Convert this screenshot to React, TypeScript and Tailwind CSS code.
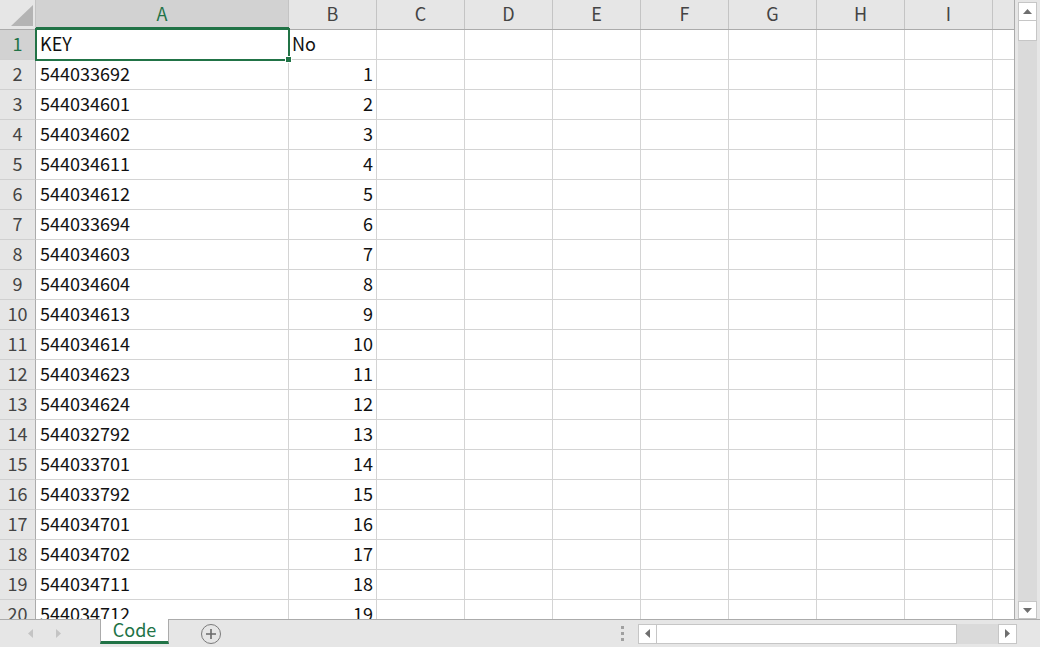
import React from 'react';

const data: [string, number][] = [
  ['544033692', 1],
  ['544034601', 2],
  ['544034602', 3],
  ['544034611', 4],
  ['544034612', 5],
  ['544033694', 6],
  ['544034603', 7],
  ['544034604', 8],
  ['544034613', 9],
  ['544034614', 10],
  ['544034623', 11],
  ['544034624', 12],
  ['544032792', 13],
  ['544033701', 14],
  ['544033792', 15],
  ['544034701', 16],
  ['544034702', 17],
  ['544034711', 18],
  ['544034712', 19],
];

const emptyCols = ['C', 'D', 'E', 'F', 'G', 'H', 'I'];

function Tri({ dir, className }: { dir: 'up' | 'down' | 'left' | 'right'; className?: string }) {
  const pts = {
    up: '0,5 9,5 4.5,0',
    down: '0,0 9,0 4.5,5',
    left: '5,0 5,9 0,4.5',
    right: '0,0 0,9 5,4.5',
  }[dir];
  const vertical = dir === 'up' || dir === 'down';
  return (
    <svg width={vertical ? 9 : 5} height={vertical ? 5 : 9} className={className}>
      <polygon points={pts} fill="currentColor" />
    </svg>
  );
}

function Row({ n, a, b }: { n: number; a: string; b: string | number }) {
  const sel = n === 1;
  return (
    <div className="flex h-[30px] shrink-0">
      <div
        className={`w-[36px] shrink-0 flex items-center justify-center pb-[3px] border-r border-b border-r-[#ababab] border-b-[#d0d0d0] ${
          sel ? 'bg-[#d2d2d2] text-[#217346]' : 'bg-[#e6e6e6] text-[#444]'
        }`}
      >
        {n}
      </div>
      <div className="w-[253px] shrink-0 flex items-center pl-[4px] pb-[3px] border-r border-b border-[#d4d4d4] bg-white">
        {a}
      </div>
      <div
        className={`w-[88px] shrink-0 flex items-center pb-[3px] border-r border-b border-[#d4d4d4] bg-white ${
          typeof b === 'number' ? 'justify-end pr-[3px]' : 'pl-[3px]'
        }`}
      >
        {b}
      </div>
      {emptyCols.map((c) => (
        <div key={c} className="w-[88px] shrink-0 border-r border-b border-[#d4d4d4] bg-white" />
      ))}
      <div className="flex-1 border-b border-[#d4d4d4] bg-white" />
    </div>
  );
}

export default function App() {
  return (
    <div className="w-[1040px] h-[647px] flex flex-col overflow-hidden bg-[#e6e6e6] text-[18px] leading-none text-[#111] font-['Noto_Sans_CJK_JP','Noto_Sans',sans-serif]">
      <div className="flex h-[619px] shrink-0">
        {/* grid */}
        <div className="relative w-[1014px] shrink-0 overflow-hidden flex flex-col bg-white">
          <div className="flex h-[30px] shrink-0 bg-[#e6e6e6] border-b border-[#ababab] text-[#444]">
            <div className="w-[36px] shrink-0 border-r border-[#c4c4c4] relative">
              <svg width="23" height="22" className="absolute left-[11px] top-[5px]">
                <polygon points="22,0 22,21 0,21" fill="#b4b4b4" />
              </svg>
            </div>
            <div className="w-[253px] shrink-0 flex items-center justify-center pb-[3px] border-r border-[#c4c4c4] bg-[#d2d2d2] text-[#217346]">
              A
            </div>
            <div className="w-[88px] shrink-0 flex items-center justify-center pb-[3px] border-r border-[#c4c4c4]">B</div>
            {emptyCols.map((c) => (
              <div key={c} className="w-[88px] shrink-0 flex items-center justify-center pb-[3px] border-r border-[#c4c4c4]">
                {c}
              </div>
            ))}
            <div className="flex-1" />
          </div>
          <Row n={1} a="KEY" b="No" />
          {data.map(([k, v], i) => (
            <Row key={k} n={i + 2} a={k} b={v} />
          ))}

          {/* selection on A1 */}
          <div className="absolute left-[36px] top-[27px] w-[253px] h-[3px] bg-[#217346]" />
          <div className="absolute left-[35px] top-[28px] w-[255px] h-[33px] border-2 border-[#217346]" />
          <div className="absolute left-[285px] top-[56px] w-[7px] h-[7px] bg-[#217346] border border-white" />
        </div>

        {/* vertical scrollbar */}
        <div className="w-[26px] shrink-0 border-l border-[#ababab] flex flex-col pl-[3px] pr-[3px] pt-[2px]">
          <div className="h-[19px] shrink-0 bg-white border border-[#c6c6c6] flex items-center justify-center text-[#6f6f6f]">
            <Tri dir="up" />
          </div>
          <div className="h-[21px] shrink-0 bg-white border border-[#c6c6c6] -mt-px" />
          <div className="flex-1 bg-[#dadada]" />
          <div className="h-[18px] shrink-0 bg-white border border-[#c6c6c6] flex items-center justify-center text-[#6f6f6f]">
            <Tri dir="down" />
          </div>
        </div>
      </div>

      {/* bottom bar */}
      <div className="flex-1 flex items-center border-t border-[#ababab]">
        <div className="w-[100px] shrink-0 flex items-center gap-[23px] pl-[28px] text-[#c4c4c4]">
          <Tri dir="left" />
          <Tri dir="right" />
        </div>
        <div className="w-[69px] shrink-0 self-start -mt-px h-[25px] pb-[3px] bg-white border-x border-[#ababab] border-b-[3px] border-b-[#217346] flex items-center justify-center text-[#217346]">
          Code
        </div>
        <div className="ml-[32px] w-[20px] h-[20px] rounded-full border-[1.5px] border-[#7a7a7a] flex items-center justify-center">
          <svg width="12" height="12">
            <path d="M6 1 V11 M1 6 H11" stroke="#6a6a6a" strokeWidth="1.6" />
          </svg>
        </div>
        <div className="flex-1" />
        <div className="flex flex-col gap-[3px] mr-[14px]">
          <div className="w-[3px] h-[3px] bg-[#a0a0a0]" />
          <div className="w-[3px] h-[3px] bg-[#a0a0a0]" />
          <div className="w-[3px] h-[3px] bg-[#a0a0a0]" />
        </div>
        <div className="flex items-center h-[20px] mr-[23px]">
          <div className="w-[19px] h-[20px] bg-white border border-[#c6c6c6] flex items-center justify-center text-[#6f6f6f]">
            <Tri dir="left" />
          </div>
          <div className="w-[341px] h-[20px] bg-[#dadada] flex">
            <div className="w-[301px] h-[20px] bg-white border border-[#c6c6c6] -ml-px" />
          </div>
          <div className="w-[19px] h-[20px] bg-white border border-[#c6c6c6] flex items-center justify-center text-[#6f6f6f]">
            <Tri dir="right" />
          </div>
        </div>
      </div>
    </div>
  );
}
